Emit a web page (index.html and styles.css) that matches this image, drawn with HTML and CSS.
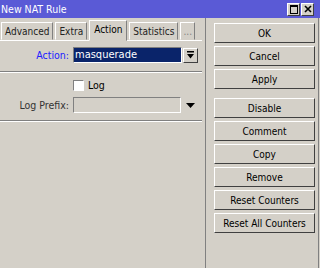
FILE: index.html
```html
<!DOCTYPE html>
<html>
<head>
<meta charset="utf-8">
<link rel="stylesheet" href="styles.css">
</head>
<body>
<div class="window">
  <div class="titlebar">
    <span class="title">New NAT Rule</span>
    <div class="winbtns">
      <span class="winbtn"><span class="maxicon"></span></span>
      <span class="winbtn"><svg width="8" height="8" viewBox="0 0 8 8"><path d="M1 1L7 7M7 1L1 7" stroke="#000" stroke-width="1.6"/></svg></span>
    </div>
  </div>
  <div class="main">
    <div class="left">
      <div class="tabs">
        <div class="tab">Advanced</div>
        <div class="tab">Extra</div>
        <div class="tab active">Action</div>
        <div class="tab">Statistics</div>
        <div class="tab more">...</div>
      </div>
      <div class="panel">
        <div class="row row-action">
          <label class="lbl blue">Action:</label>
          <div class="select">masquerade</div>
          <div class="dropbtn"><svg width="7" height="8" viewBox="0 0 7 8"><path d="M0 0H7V1.5H0Z M0 3H7L3.5 7.5Z" fill="#000"/></svg></div>
        </div>
        <div class="sep"></div>
        <div class="row row-log">
          <span class="lbl"></span>
          <span class="checkbox"></span>
          <span class="cblabel">Log</span>
        </div>
        <div class="row row-prefix">
          <label class="lbl">Log Prefix:</label>
          <div class="field"></div>
          <svg class="arrow" width="9" height="5" viewBox="0 0 9 5"><path d="M0 0H9L4.5 5Z" fill="#000"/></svg>
        </div>
        <div class="sep2"></div>
      </div>
    </div>
    <div class="right">
      <div class="btn">OK</div>
      <div class="btn">Cancel</div>
      <div class="btn">Apply</div>
      <div class="btn gap">Disable</div>
      <div class="btn">Comment</div>
      <div class="btn">Copy</div>
      <div class="btn">Remove</div>
      <div class="btn">Reset Counters</div>
      <div class="btn">Reset All Counters</div>
    </div>
  </div>
</div>
</body>
</html>
```
FILE: styles.css
```css
html, body {
  margin: 0;
  padding: 0;
  width: 320px;
  height: 268px;
  overflow: hidden;
  background: #d4d0c8;
  font-family: "DejaVu Sans Condensed", "DejaVu Sans", sans-serif;
  font-size: 10px;
  color: #000;
}
.window {
  height: 268px;
  display: flex;
  flex-direction: column;
}
.titlebar {
  height: 18px;
  background: #5a5ad6;
  display: flex;
  align-items: center;
  justify-content: space-between;
  padding: 0 6px 0 1px;
}
.title {
  color: #fff;
  font-size: 10.5px;
}
.winbtns {
  display: flex;
  gap: 1px;
}
.winbtn {
  width: 11px;
  height: 11px;
  background: #d4d0c8;
  border: 1px solid;
  border-color: #fff #404040 #404040 #fff;
  display: flex;
  align-items: center;
  justify-content: center;
}
.maxicon {
  width: 6px;
  height: 6px;
  border: 1px solid #000;
  border-top-width: 2px;
}
.main {
  flex: 1;
  display: flex;
}
.left {
  width: 205px;
  border-right: 1px solid #808080;
  display: flex;
  flex-direction: column;
}
.tabs {
  display: flex;
  align-items: flex-end;
  height: 22px;
  padding-left: 1px;
  gap: 2px;
}
.tab {
  height: 18px;
  padding: 0 3px;
  border: 1px solid;
  border-color: #fff #808080 transparent #fff;
  display: flex;
  align-items: center;
  font-size: 10px;
  color: #222;
  box-sizing: border-box;
}
.tab.active {
  height: 21px;
  color: #000;
  margin-bottom: -1px;
  background: #d4d0c8;
  position: relative;
  z-index: 1;
  padding: 0 4px 2px;
}
.tab.more {
  color: #808080;
  padding: 0 2px;
}
.panel {
  flex: 1;
  border-top: 1px solid #fff;
  padding-top: 6px;
  width: 202px;
}
.row {
  display: flex;
  align-items: center;
}
.lbl {
  width: 69px;
  text-align: right;
  padding-right: 4px;
  font-size: 10.5px;
  color: #333;
}
.lbl.blue {
  color: #2020ff;
}
.select {
  width: 106px;
  height: 14px;
  background: #0a246a;
  color: #fff;
  font-size: 11px;
  line-height: 14px;
  padding-left: 1px;
  border: 1px solid;
  border-color: #808080 #fff #fff #808080;
}
.dropbtn {
  width: 13px;
  height: 13px;
  margin-left: 1px;
  border: 1px solid;
  border-color: #fff #404040 #404040 #fff;
  display: flex;
  align-items: center;
  justify-content: center;
}
.sep {
  height: 0;
  border-top: 1px solid #808080;
  border-bottom: 1px solid #fff;
  margin: 8px 0 5px;
}
.row-log {
  height: 14px;
}
.checkbox {
  width: 9px;
  height: 9px;
  background: #fff;
  border: 1px solid;
  border-color: #808080 #fff #fff #808080;
}
.cblabel {
  margin-left: 4px;
  font-size: 10.5px;
}
.row-prefix {
  margin-top: 5px;
}
.field {
  width: 106px;
  height: 14px;
  border: 1px solid;
  border-color: #808080 #fff #fff #808080;
}
.arrow {
  margin-left: 5px;
}
.sep2 {
  height: 0;
  border-top: 1px solid #808080;
  border-bottom: 1px solid #fff;
  margin-top: 7px;
}
.right {
  flex: 1;
  display: flex;
  flex-direction: column;
  padding: 5px 0 0 8px;
  gap: 3px;
  border-right: 1px solid #808080;
  margin-right: 1px;
}
.btn {
  width: 99px;
  height: 18px;
  border: 1px solid;
  border-color: #fff #404040 #404040 #fff;
  display: flex;
  align-items: center;
  justify-content: center;
  font-size: 10px;
}
.btn.gap {
  margin-top: 6px;
}
```
